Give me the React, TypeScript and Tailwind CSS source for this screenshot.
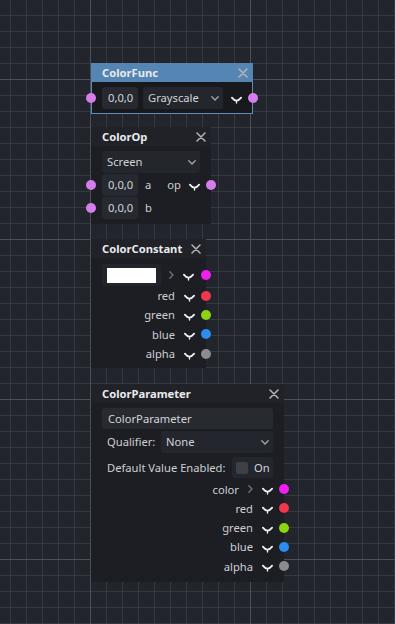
import type { ReactNode } from 'react'

// Cores das portas (estilo visual shader)
const PORT = {
  vec3: 'bg-[#d67dee]',
  color: 'bg-[#f01ff0]',
  red: 'bg-[#f2364c]',
  green: 'bg-[#8ad50f]',
  blue: 'bg-[#2d8cf0]',
  alpha: 'bg-[#8c8c8c]',
}

function Grid() {
  const xs: number[] = []
  for (let x = 10; x < 395; x += 16) xs.push(x)
  const ys: number[] = []
  for (let y = 15; y < 624; y += 16) ys.push(y)
  const minorX = xs.filter((x) => (x - 90) % 160 !== 0)
  const majorX = xs.filter((x) => (x - 90) % 160 === 0)
  const minorY = ys.filter((y) => (y - 79) % 160 !== 0)
  const majorY = ys.filter((y) => (y - 79) % 160 === 0)
  return (
    <svg className="absolute inset-0" width={395} height={624}>
      {minorX.map((x) => (
        <line key={`mx${x}`} x1={x + 0.5} x2={x + 0.5} y1={0} y2={624} stroke="#353942" />
      ))}
      {minorY.map((y) => (
        <line key={`my${y}`} y1={y + 0.5} y2={y + 0.5} x1={0} x2={395} stroke="#353942" />
      ))}
      {majorX.map((x) => (
        <line key={`Mx${x}`} x1={x + 0.5} x2={x + 0.5} y1={0} y2={624} stroke="#4b4f58" />
      ))}
      {majorY.map((y) => (
        <line key={`My${y}`} y1={y + 0.5} y2={y + 0.5} x1={0} x2={395} stroke="#4b4f58" />
      ))}
    </svg>
  )
}

function CloseIcon() {
  return (
    <svg width="10" height="10" viewBox="0 0 10 10" className="shrink-0">
      <path d="M1 1 L9 9 M9 1 L1 9" stroke="#b3b6bb" strokeWidth="1.5" strokeLinecap="round" />
    </svg>
  )
}

/** Olho fechado (preview desligado). */
function EyeIcon() {
  return (
    <svg width="11" height="12" viewBox="0 0 11 12" className="shrink-0">
      <path d="M0.9 5.6 Q5.5 11.6 10.1 5.6" fill="none" stroke="#efefef" strokeWidth="1.8" strokeLinecap="round" />
      <path d="M5.5 9 L5.5 11" stroke="#efefef" strokeWidth="1.4" strokeLinecap="round" />
    </svg>
  )
}

function ChevronDown() {
  return (
    <svg width="8" height="5" viewBox="0 0 8 5" className="shrink-0">
      <path d="M0.8 0.8 L4 4 L7.2 0.8" fill="none" stroke="#a3a6ab" strokeWidth="1.3" strokeLinecap="round" />
    </svg>
  )
}

function ChevronRight() {
  return (
    <svg width="5" height="8" viewBox="0 0 5 8" className="shrink-0">
      <path d="M0.8 0.8 L4 4 L0.8 7.2" fill="none" stroke="#6f737a" strokeWidth="1.3" strokeLinecap="round" />
    </svg>
  )
}

function Port({ color, side }: { color: string; side: 'left' | 'right' }) {
  return (
    <span
      className={[
        'absolute top-1/2 h-[10px] w-[10px] -translate-y-1/2 rounded-full',
        color,
        side === 'left' ? '-left-[16px]' : '-right-[16px]',
      ].join(' ')}
    />
  )
}

function ValueBox({ children }: { children: ReactNode }) {
  return (
    <div className="flex h-[22px] w-[36px] shrink-0 items-center rounded-[3px] bg-[#262930] pl-[6px] text-[#d2d4d8]">
      {children}
    </div>
  )
}

function Select({ label, className }: { label: string; className: string }) {
  return (
    <div className={`flex h-[22px] items-center justify-between rounded-[3px] bg-[#23262c] pl-[5px] pr-[4px] text-[#d2d4d8] ${className}`}>
      <span>{label}</span>
      <ChevronDown />
    </div>
  )
}

function Header({ title, selected }: { title: string; selected?: boolean }) {
  return (
    <div
      className={[
        'flex h-[19px] items-center justify-between pl-[11px] pr-[5px]',
        selected ? 'bg-[#5585b2]' : 'bg-[#202228]',
      ].join(' ')}
    >
      <span className="font-bold text-[#e9eaec]">{title}</span>
      <CloseIcon />
    </div>
  )
}

function OutRow({ label, color, arrow }: { label: string; color: string; arrow?: boolean }) {
  return (
    <div className="relative flex h-[19.3px] items-center justify-end text-[#cdcfd3]">
      <span>{label}</span>
      {arrow && (
        <span className="ml-[9px] flex">
          <ChevronRight />
        </span>
      )}
      <span className="ml-[9px] flex">
        <EyeIcon />
      </span>
      <Port color={color} side="right" />
    </div>
  )
}

export default function App() {
  return (
    <div className="relative h-[624px] w-[395px] overflow-hidden bg-[#22252c] font-['Noto_Sans'] text-[11.2px] leading-none">
      <Grid />

      {/* ColorFunc (selecionado) */}
      <div className="absolute left-[91px] top-[63px] w-[162px]">
        <Header title="ColorFunc" selected />
        <div className="border-x border-b border-[#5a8cbd] bg-[#17191d] px-[10px] pb-[4px] pt-[5px]">
          <div className="relative flex h-[22px] items-center">
            <Port color={PORT.vec3} side="left" />
            <ValueBox>0,0,0</ValueBox>
            <Select label="Grayscale" className="ml-[5px] w-[80px]" />
            <span className="ml-auto flex">
              <EyeIcon />
            </span>
            <Port color={PORT.vec3} side="right" />
          </div>
        </div>
      </div>

      {/* ColorOp */}
      <div className="absolute left-[91px] top-[127px] w-[120px]">
        <Header title="ColorOp" />
        <div className="flex flex-col gap-px bg-[#1c1e23] px-[11px] pb-[5px] pt-[5px]">
          <Select label="Screen" className="w-full" />
          <div className="relative flex h-[22px] items-center text-[#cdcfd3]">
            <Port color={PORT.vec3} side="left" />
            <ValueBox>0,0,0</ValueBox>
            <span className="ml-[7px]">a</span>
            <span className="ml-auto">op</span>
            <span className="ml-[8px] flex">
              <EyeIcon />
            </span>
            <Port color={PORT.vec3} side="right" />
          </div>
          <div className="relative flex h-[22px] items-center text-[#cdcfd3]">
            <Port color={PORT.vec3} side="left" />
            <ValueBox>0,0,0</ValueBox>
            <span className="ml-[7px]">b</span>
          </div>
        </div>
      </div>

      {/* ColorConstant */}
      <div className="absolute left-[91px] top-[239px] w-[115px]">
        <Header title="ColorConstant" />
        <div className="flex flex-col bg-[#1c1e23] px-[11px] pb-[5px] pt-[6px]">
          <div className="relative flex h-[22px] items-center">
            <div className="flex h-[22px] w-[59px] items-center rounded-[3px] bg-[#22252b] px-[5px]">
              <div className="h-[15px] w-[49px] bg-white" />
            </div>
            <span className="ml-[8px] flex">
              <ChevronRight />
            </span>
            <span className="ml-[9px] flex">
              <EyeIcon />
            </span>
            <Port color={PORT.color} side="right" />
          </div>
          <OutRow label="red" color={PORT.red} />
          <OutRow label="green" color={PORT.green} />
          <OutRow label="blue" color={PORT.blue} />
          <OutRow label="alpha" color={PORT.alpha} />
        </div>
      </div>

      {/* ColorParameter */}
      <div className="absolute left-[91px] top-[384px] w-[193px]">
        <Header title="ColorParameter" />
        <div className="flex flex-col bg-[#1c1e23] px-[11px] pb-[6px] pt-[5px]">
          <div className="flex h-[21px] items-center rounded-[3px] bg-[#272a31] pl-[6px] text-[#d2d4d8]">
            ColorParameter
          </div>
          <div className="mt-[2px] flex h-[22px] items-center text-[#cdcfd3]">
            <span className="pl-[5px]">Qualifier:</span>
            <Select label="None" className="ml-auto w-[112px]" />
          </div>
          <div className="mt-[4px] flex h-[21px] items-center text-[#cdcfd3]">
            <span className="pl-[5px]">Default Value Enabled:</span>
            <div className="ml-auto flex h-[21px] w-[41px] items-center rounded-[3px] bg-[#23262c] pl-[4px]">
              <span className="h-[12px] w-[12px] rounded-[2px] bg-[#3d4046]" />
              <span className="ml-[6px] text-[#d2d4d8]">On</span>
            </div>
          </div>
          <div className="mt-[1.5px] flex flex-col">
            <OutRow label="color" color={PORT.color} arrow />
            <OutRow label="red" color={PORT.red} />
            <OutRow label="green" color={PORT.green} />
            <OutRow label="blue" color={PORT.blue} />
            <OutRow label="alpha" color={PORT.alpha} />
          </div>
        </div>
      </div>
    </div>
  )
}
